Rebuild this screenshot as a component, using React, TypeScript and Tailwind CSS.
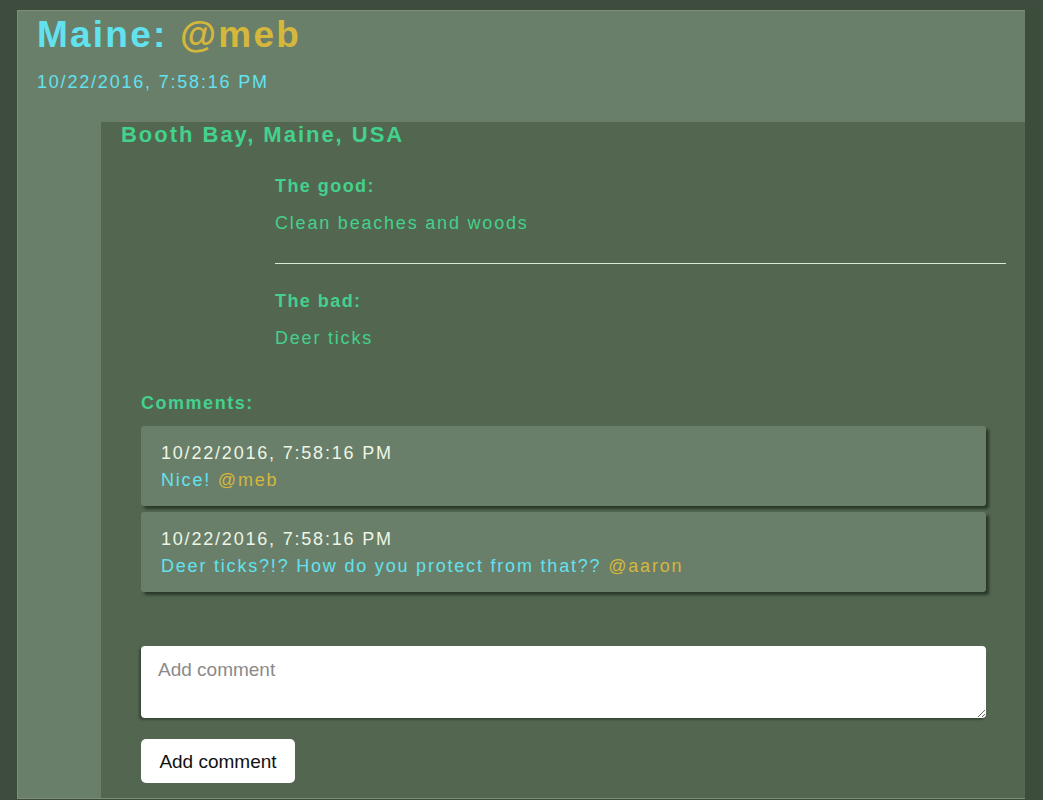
const font = { fontFamily: '"Liberation Sans", Arial, sans-serif' }

function Comment({ date, text, user }: { date: string; text: string; user: string }) {
  return (
    <div className="bg-[#6a7f69] rounded-[3px] pl-[20px] pr-4 pt-[14px] pb-[12px] shadow-[3px_3px_3px_rgba(30,45,30,0.8)]">
      <div className="text-[18px] leading-[27px] tracking-[0.1em] text-[#eef5e6]">{date}</div>
      <div className="text-[18px] leading-[27px] tracking-[0.1em] text-[#62e2ef]">
        {text} <span className="text-[#d5b73c]">{user}</span>
      </div>
    </div>
  )
}

export default function App() {
  return (
    <div style={font} className="min-h-[800px] bg-[#3e4c3e] pl-[17px] pr-[18px] pt-[10px] pb-[3px]">
      <div className="bg-[#6a7f69] border-t border-l border-b border-[#7b8f79]">
        <h1 className="pl-[19px] pt-[2px] text-[37px] leading-[44px] tracking-[0.06em] font-bold text-[#62e2ef]">
          Maine: <span className="text-[#d5b73c]">@meb</span>
        </h1>
        <div className="pl-[19px] mt-[13px] text-[18px] leading-[24px] tracking-[0.1em] text-[#62e2ef]">
          10/22/2016, 7:58:16 PM
        </div>

        <div className="ml-[83px] mt-[28px] bg-[#536650] pb-[15px]">
          <h2 className="pl-[20px] text-[22px] leading-[26px] font-bold tracking-[0.09em] text-[#43d18d]">
            Booth Bay, Maine, USA
          </h2>

          <div className="ml-[174px] mr-[19px] mt-[26px] text-[18px] tracking-[0.09em] text-[#43d18d]">
            <div className="leading-[24px] font-bold tracking-[0.08em]">The good:</div>
            <div className="leading-[24px] mt-[13px] tracking-[0.1em]">Clean beaches and woods</div>
            <hr className="mt-[28px] border-0 h-px bg-[#d7ecd6]" />
            <div className="leading-[24px] font-bold tracking-[0.08em] mt-[25px]">The bad:</div>
            <div className="leading-[24px] mt-[13px] tracking-[0.1em]">Deer ticks</div>
          </div>

          <div className="pl-[40px] pr-[39px] mt-[41px]">
            <div className="text-[18px] leading-[24px] font-bold tracking-[0.085em] text-[#43d18d]">Comments:</div>
            <div className="mt-[11px] flex flex-col gap-[6px]">
              <Comment date="10/22/2016, 7:58:16 PM" text="Nice!" user="@meb" />
              <Comment date="10/22/2016, 7:58:16 PM" text="Deer ticks?!? How do you protect from that??" user="@aaron" />
            </div>

            <textarea
              placeholder="Add comment"
              className="mt-[54px] block w-full h-[72px] bg-white rounded-[4px] px-[17px] pt-[12px] pb-[8px] text-[19px] leading-[24px] text-black placeholder:text-[#8a8a8a] shadow-[-2px_2px_2px_rgba(40,55,40,0.6)] outline-none"
            />
            <button className="mt-[21px] h-[44px] w-[154px] bg-white rounded-[5px] pt-[3px] text-[19px] text-[#111]">
              Add comment
            </button>
          </div>
        </div>
      </div>
    </div>
  )
}
